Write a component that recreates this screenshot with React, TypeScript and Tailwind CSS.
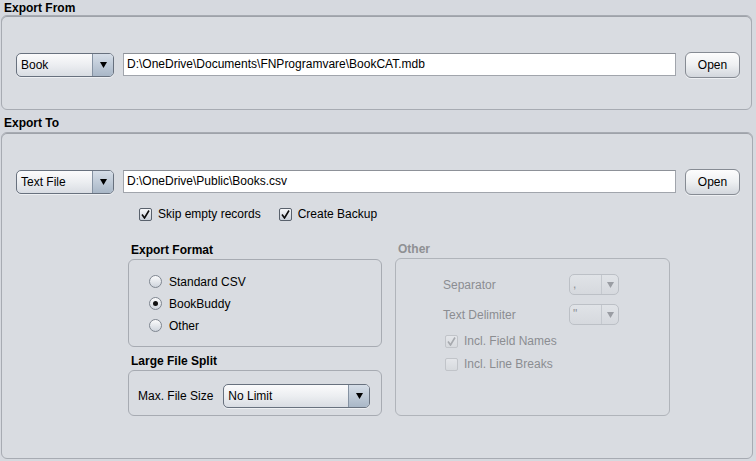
import React from "react";

function Arrow({ color = "#000" }: { color?: string }) {
  return (
    <svg width="7" height="6" viewBox="0 0 7 6">
      <path d="M0 0 L7 0 L3.5 6 Z" fill={color} />
    </svg>
  );
}

function Combo({ label, w, disabled = false }: { label: string; w: string; disabled?: boolean }) {
  if (disabled) {
    return (
      <div className={`${w} h-[21px] flex rounded-[5px] border border-[#bcc0c6] bg-gradient-to-b from-[#e0e3e7] to-[#d6d9de] text-[#8e9094]`}>
        <div className="flex-1 pl-[3px] leading-[19px]">{label}</div>
        <div className="w-[17px] border-l border-[#c4c8ce] flex items-center justify-center">
          <Arrow color="#9a9da3" />
        </div>
      </div>
    );
  }
  return (
    <div className={`${w} h-[24px] flex rounded-[5px] border border-[#68717e] bg-gradient-to-b from-[#fbfbfc] via-[#eceef1] to-[#d9dde3] shadow-[0_1px_0_#eef0f3]`}>
      <div className="flex-1 pl-[4px] leading-[22px]">{label}</div>
      <div className="w-[21px] border-l border-[#8592a2] rounded-r-[4px] bg-gradient-to-b from-[#d6dee8] to-[#a9b7c7] flex items-center justify-center">
        <Arrow />
      </div>
    </div>
  );
}

function Field({ value }: { value: string }) {
  return (
    <div className="w-[553px] h-[23px] bg-white border border-[#a1a5ac] border-t-[#8d9198] pl-[3px] leading-[21px]">
      {value}
    </div>
  );
}

function OpenBtn() {
  return (
    <div className="w-[55px] h-[26px] rounded-[6px] border border-[#868b93] bg-gradient-to-b from-[#fdfdfd] via-[#eef0f2] to-[#d3d7dd] flex items-center justify-center shadow-[0_1px_0_#eef0f3]">
      Open
    </div>
  );
}

function Check({ checked, disabled = false }: { checked: boolean; disabled?: boolean }) {
  return (
    <div
      className={`w-[13px] h-[13px] rounded-[2px] border flex items-center justify-center ${
        disabled
          ? "border-[#c1c4c9] bg-gradient-to-b from-[#e4e6ea] to-[#d7dade]"
          : "border-[#59616c] bg-gradient-to-b from-[#f7f8fa] to-[#c9d0da]"
      }`}
    >
      {checked && (
        <svg width="9" height="9" viewBox="0 0 9 9">
          <path d="M1 4.5 L3.5 8 L8 0.5" fill="none" stroke={disabled ? "#a6a9ae" : "#0b0b0b"} strokeWidth="1.6" />
        </svg>
      )}
    </div>
  );
}

function Radio({ selected }: { selected: boolean }) {
  return (
    <div className="w-[13px] h-[13px] rounded-full border border-[#7f8690] bg-gradient-to-b from-[#fbfbfc] to-[#cfd5dd] flex items-center justify-center">
      {selected && <div className="w-[5px] h-[5px] rounded-full bg-[#111]" />}
    </div>
  );
}

export default function App() {
  return (
    <div className="w-[756px] h-[461px] bg-[#d6d9df] font-['Liberation_Sans',Arial,sans-serif] text-[12px] text-black overflow-hidden">
      <div className="pl-[4px] pt-[2px] h-[15px] font-bold leading-[13px]">Export From</div>
      <div className="ml-[1px] w-[751px] h-[95px] rounded-[6px] border border-[#a7abb2] shadow-[inset_0_1px_0_#9ea2a9] bg-[#d9dce1] pt-[37px] pl-[14px] flex items-start">
        <Combo label="Book" w="w-[98px]" />
        <div className="ml-[9px]">
          <Field value="D:\OneDrive\Documents\FNProgramvare\BookCAT.mdb" />
        </div>
        <div className="ml-[9px] -mt-[1px]">
          <OpenBtn />
        </div>
      </div>

      <div className="pl-[4px] pt-[7px] h-[22px] font-bold leading-[13px]">Export To</div>
      <div className="ml-[1px] w-[752px] h-[327px] rounded-[6px] border border-[#a7abb2] shadow-[inset_0_1px_0_#9ea2a9] bg-[#d9dce1] pt-[37px] pl-[14px] flex flex-col">
        <div className="flex items-start">
          <Combo label="Text File" w="w-[98px]" />
          <div className="ml-[9px]">
            <Field value="D:\OneDrive\Public\Books.csv" />
          </div>
          <div className="ml-[9px] -mt-[1px]">
            <OpenBtn />
          </div>
        </div>

        <div className="flex items-center mt-[12px] pl-[123px] h-[14px]">
          <Check checked />
          <span className="ml-[6px]">Skip empty records</span>
          <div className="ml-[18px]">
            <Check checked />
          </div>
          <span className="ml-[6px]">Create Backup</span>
        </div>

        <div className="flex mt-[23px] pl-[112px]">
          <div className="flex flex-col">
            <div className="pl-[3px] h-[15px] font-bold leading-[13px]">Export Format</div>
            <div className="w-[254px] h-[88px] rounded-[6px] border border-[#a7abb2] bg-[#d9dce1] flex flex-col pl-[20px] pt-[15px] gap-[9px]">
              <div className="flex items-center h-[13px]">
                <Radio selected={false} />
                <span className="ml-[7px]">Standard CSV</span>
              </div>
              <div className="flex items-center h-[13px]">
                <Radio selected />
                <span className="ml-[7px]">BookBuddy</span>
              </div>
              <div className="flex items-center h-[13px]">
                <Radio selected={false} />
                <span className="ml-[7px]">Other</span>
              </div>
            </div>
            <div className="pl-[3px] mt-[8px] h-[15px] font-bold leading-[13px]">Large File Split</div>
            <div className="w-[254px] h-[46px] rounded-[6px] border border-[#a7abb2] bg-[#d9dce1] pl-[9px] pt-[13px]">
              <div className="flex items-center">
                <span>Max. File Size</span>
                <div className="ml-[10px]">
                  <Combo label="No Limit" w="w-[147px]" />
                </div>
              </div>
            </div>
          </div>

          <div className="flex flex-col ml-[13px] -mt-[1px]">
            <div className="pl-[3px] h-[15px] font-bold leading-[13px] text-[#8f9093]">Other</div>
            <div className="w-[275px] h-[158px] rounded-[6px] border border-[#b0b4ba] bg-[#d9dce1] flex flex-col text-[#8b8d91] pt-[15px]">
              <div className="flex items-center pl-[47px] h-[21px]">
                <span className="w-[126px]">Separator</span>
                <Combo label="," w="w-[50px]" disabled />
              </div>
              <div className="flex items-center pl-[47px] h-[21px] mt-[9px]">
                <span className="w-[126px]">Text Delimiter</span>
                <Combo label={'"'} w="w-[50px]" disabled />
              </div>
              <div className="flex items-center pl-[49px] mt-[9px] h-[14px]">
                <Check checked disabled />
                <span className="ml-[6px]">Incl. Field Names</span>
              </div>
              <div className="flex items-center pl-[49px] mt-[9px] h-[14px]">
                <Check checked={false} disabled />
                <span className="ml-[6px]">Incl. Line Breaks</span>
              </div>
            </div>
          </div>
        </div>
      </div>
    </div>
  );
}
